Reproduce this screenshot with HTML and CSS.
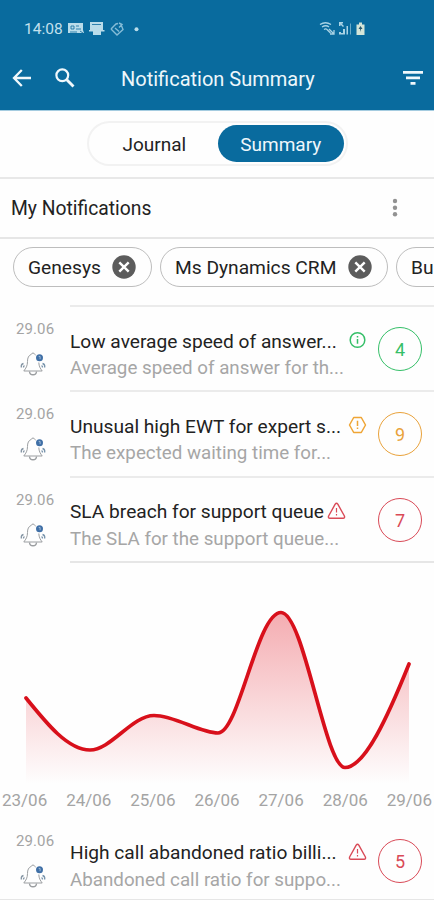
FILE: index.html
```html
<!DOCTYPE html>
<html lang="en">
<head>
  <meta charset="UTF-8" />
  <meta name="viewport" content="width=device-width, initial-scale=1.0" />
  <title>Notification Summary</title>
  <link rel="stylesheet" href="styles.css">
</head>
<body>

<!-- Shared icons -->
<svg class="sprite" width="0" height="0">
  <symbol id="bell" viewBox="0 0 28 26">
    <g fill="none" stroke="#9b9ea1" stroke-width="1">
      <path d="M12.5 3.2c.4-1.600 2.600-1.600 3 0M12.5 3.2C9.400 4.500 8.500 7 8.500 10.500c0 4.500-1.500 6.500-3.700 9.500h18.400c-1.900-2.500-3.200-4.500-3.400-8.500M15.500 3.200l1.200.8" />
      <path d="M10.500 20.500c.3 4.300 6.700 4.300 7 0" stroke-width="1.400" />
      <path d="M4.500 12.500C2.500 13 2 14.500 2.300 16.500M5.500 14.700c-.9.300-1.100 1-1 1.800" stroke="#8696a5" stroke-width="1.300" />
      <path d="M23.500 12.500c2 .5 2.500 2 2.200 4M22.500 14.700c.9.300 1.100 1 1 1.800" stroke="#7894ac" stroke-width="1.300" />
    </g>
    <circle cx="20.500" cy="6.800" r="3.500" fill="#3f6fa6" />
    <path d="M19.700 5.400h1.400v2.800" fill="none" stroke="#b5cce2" stroke-width=".8" />
  </symbol>
  <symbol id="close" viewBox="0 0 24 24">
    <circle cx="12" cy="12" r="11.700" fill="#5c5c5c" />
    <path d="M7.300 7.300l9.400 9.400M16.700 7.300l-9.400 9.400" stroke="#fff" stroke-width="2.400" />
  </symbol>
  <symbol id="info" viewBox="0 0 18 18">
    <g fill="none" stroke="#35bf68" stroke-width="1.500">
      <circle cx="9" cy="9" r="7.300" />
      <path d="M9 8v4.800M9 4.900v1.600" />
    </g>
  </symbol>
  <symbol id="warning" viewBox="0 0 18 18">
    <g fill="none" stroke="#efa535" stroke-width="1.500" stroke-linejoin="round">
      <path d="M5.200 1.500h7.600L17 9l-4.200 7.500H5.200L1 9z" />
      <path d="M9 4.800v5.200M9 11.500v1.600" />
    </g>
  </symbol>
  <symbol id="alert" viewBox="0 0 18 18">
    <g fill="none" stroke="#d94a57" stroke-width="1.400" stroke-linejoin="round">
      <path d="M7.700 2.200Q9 .4 10.300 2.200L16.900 14q.7 2-1.300 2.200H2.400Q.4 16 1.100 14z" />
      <path d="M9 6v4.600M9 12v1.600" stroke-width="1.200" />
    </g>
  </symbol>
</svg>

<header>
  <div class="status-bar">
    <span class="clock">14:08</span>
    <svg class="status-left" width="74" height="16" viewBox="0 0 74 16">
      <g fill="#b9dcea">
        <path d="M0 2h15v7l1 3H0z" />
        <path d="M22 1h13v8h1.500v1.500H33V14h-8v-3.500h-4V9h1z" />
        <circle cx="68.500" cy="8.300" r="2" />
      </g>
      <g fill="none" stroke="#0a6a9e">
        <path d="M3 5h3v3H3zM8 5h3M8 8h5M2 11h7M12 10l3 2" stroke-width=".8" />
        <path d="M24 3.500h9" stroke-width=".8" />
      </g>
      <g fill="none" stroke="#85bcd7" stroke-width="1.400">
        <path d="M43 8l5-5 2-.5M47 12l2 2 6-5.500-2-5M43 8l4 4M51 2l3 1.500-3 3M47 7l4 3.500" />
      </g>
    </svg>
    <svg class="status-right" width="48" height="16" viewBox="0 0 48 16">
      <g fill="none" stroke="#a9d3e5" stroke-width="1.300">
        <path d="M1 3.500q5.500-3.500 11 0M3 6q4-2.500 7 0M5 8.500q2-1.500 3.500.5l3 3M10 8l5 5M15 9v4h-4" />
      </g>
      <g fill="#a9d3e5">
        <path d="M20 1h4v1.500h-1.500L25 5l-1 1-2.500-2.500V5H20zM20 11h2v2.500h-2zM24 8h2v5.500h-5V12h3zM27.500 5H29v8.500h-1.500z" />
        <path d="M31 2.500h1v11h-1z" opacity=".6" />
        <path d="M37.500 3.500h2.500V1.500h3v2h2.500v10.500h-8z" fill="#d4e5d8" />
      </g>
      <path d="M41.500 5l2 3h-1.500l-.5 3-.5-3h-1.500z" fill="#27596e" />
    </svg>
  </div>
  <div class="app-bar">
    <svg class="back" width="20" height="20" viewBox="0 0 20 20" fill="none" stroke="#f0f8fc" stroke-width="2.300">
      <path d="M9.800 2L2 10l7.800 8M2 10h17" />
    </svg>
    <svg class="search" width="22" height="22" viewBox="0 0 22 22" fill="none" stroke="#f0f8fc">
      <circle cx="8.300" cy="8.300" r="5.900" stroke-width="2.200" />
      <path d="M12.800 12.800l6.700 6.700" stroke-width="2.900" />
    </svg>
    <h1>Notification Summary</h1>
    <svg class="filter" width="22" height="16" viewBox="0 0 22 16" fill="#f0f8fc">
      <path d="M1 1h20v2.800H1zM4 6.500h14v2.800H4zM8.500 12h5v2.800h-5z" />
    </svg>
  </div>
</header>

<div class="tabs">
  <div class="switch">
    <a class="tab">Journal</a>
    <a class="tab active">Summary</a>
  </div>
</div>

<div class="section-title">
  <h2>My Notifications</h2>
  <svg width="6" height="20" viewBox="0 0 6 20" fill="#929292">
    <circle cx="3" cy="3" r="2.200" /><circle cx="3" cy="9.700" r="2.200" /><circle cx="3" cy="16.300" r="2.200" />
  </svg>
</div>

<div class="chips">
  <div class="chip genesys"><span>Genesys</span><svg><use href="#close" /></svg></div>
  <div class="chip dynamics"><span>Ms Dynamics CRM</span><svg><use href="#close" /></svg></div>
  <div class="chip business"><span>Bu</span></div>
</div>

<main>
  <article class="row">
    <div class="when"><time>29.06</time><svg><use href="#bell" /></svg></div>
    <div class="body">
      <h3><span class="name long">Low average speed of answer...</span><svg><use href="#info" /></svg></h3>
      <p>Average speed of answer for th...</p>
      <span class="count green">4</span>
    </div>
  </article>

  <article class="row">
    <div class="when"><time>29.06</time><svg><use href="#bell" /></svg></div>
    <div class="body">
      <h3><span class="name long">Unusual high EWT for expert s...</span><svg><use href="#warning" /></svg></h3>
      <p>The expected waiting time for...</p>
      <span class="count orange">9</span>
    </div>
  </article>

  <article class="row">
    <div class="when"><time>29.06</time><svg><use href="#bell" /></svg></div>
    <div class="body">
      <h3><span class="name">SLA breach for support queue</span><svg><use href="#alert" /></svg></h3>
      <p>The SLA for the support queue...</p>
      <span class="count red">7</span>
    </div>
  </article>

  <div class="divider"></div>

  <section class="chart">
    <svg width="434" height="224" viewBox="0 563 434 224">
      <defs>
        <linearGradient id="fade" gradientUnits="userSpaceOnUse" x1="0" y1="612" x2="0" y2="784">
          <stop offset="0" stop-color="#e31b28" stop-opacity=".36" />
          <stop offset="1" stop-color="#e31b28" stop-opacity="0" />
        </linearGradient>
      </defs>
      <path fill="url(#fade)" d="M26 698C47 724 68 750 90 750C111 750 132 715.500 154 715.500C175 715.500 200 733 218 733C239 733 257 612.500 281 612.500C304 612.500 325 767.500 345 767.500C365 767.500 388 716 409 664V784H26z" />
      <path fill="none" stroke="#d8101b" stroke-width="3.700" stroke-linecap="round" d="M26 698C47 724 68 750 90 750C111 750 132 715.500 154 715.500C175 715.500 200 733 218 733C239 733 257 612.500 281 612.500C304 612.500 325 767.500 345 767.500C365 767.500 388 716 409 664" />
    </svg>
    <div class="days">
      <span>23/06</span><span>24/06</span><span>25/06</span><span>26/06</span><span>27/06</span><span>28/06</span><span>29/06</span>
    </div>
  </section>

  <article class="row last">
    <div class="when"><time>29.06</time><svg><use href="#bell" /></svg></div>
    <div class="body">
      <h3><span class="name long">High call abandoned ratio billi...</span><svg><use href="#alert" /></svg></h3>
      <p>Abandoned call ratio for suppo...</p>
      <span class="count red">5</span>
    </div>
  </article>
</main>

</body>
</html>
```
FILE: styles.css
```css
* { box-sizing: border-box; }
body {
  margin: 0;
  width: 434px;
  height: 900px;
  overflow: hidden;
  background: #fefefe;
  color: #222;
  font-family: Roboto, sans-serif;
}
h1, h2, h3, p { margin: 0; font-weight: normal; white-space: nowrap; }
svg { display: block; flex: none; }
.sprite { position: absolute; }

header {
  height: 111px;
  background: #096b9e;
  border-bottom: 1px solid #a5cce0;
  color: #eef7fb;
}
.status-bar {
  display: flex;
  align-items: center;
  height: 36px;
  padding: 21px 67px 0 24px;
}
.clock {
  width: 44px;
  font-size: 15.500px;
  line-height: 16px;
  color: #c3e0ed;
}
.status-right { margin-left: auto; }
.app-bar {
  display: flex;
  align-items: center;
  height: 84px;
  padding: 0 10px 0 12px;
}
.search { margin-left: 22px; }
.app-bar h1 {
  margin-left: 45px;
  padding-top: 2px;
  font-size: 20px;
}
.filter { margin-left: auto; }

.tabs {
  display: flex;
  justify-content: center;
  height: 68px;
  padding-top: 10px;
  border-bottom: 2px solid #e8e8e8;
}
.switch {
  display: flex;
  width: 261px;
  height: 45px;
  padding: 2px 2px 4px 2px;
  margin-left: 1px;
  border: 2px solid #f2f2f2;
  border-radius: 23px;
}
.tab {
  width: 127px;
  height: 37px;
  border-radius: 19px;
  text-align: center;
  font-size: 19px;
  line-height: 39px;
}
.tab.active { background: #096b9e; color: #eef7fb; }

.section-title {
  display: flex;
  align-items: center;
  justify-content: space-between;
  height: 60px;
  padding: 0 36px 0 11px;
  border-bottom: 2px solid #e6e6e6;
}
.section-title h2 { font-size: 19.300px; }

.chips {
  display: flex;
  gap: 8px;
  height: 66px;
  padding: 8px 0 0 13px;
  overflow: hidden;
}
.chip {
  display: flex;
  flex: none;
  align-items: center;
  justify-content: space-between;
  height: 40px;
  padding: 0 15px 0 14px;
  border: 1px solid #bdbdbd;
  border-radius: 21px;
  font-size: 19.200px;
  white-space: nowrap;
}
.chip svg { width: 24px; height: 24px; }
.genesys { width: 139px; }
.dynamics { width: 228px; }
.business { width: 100px; }

.row { display: flex; height: 85.300px; }
.when {
  width: 70px;
  padding: 17px 0 0 16px;
  color: #a4a4a4;
}
.when time {
  display: block;
  font-size: 15px;
  line-height: 15px;
  letter-spacing: 0.1px;
}
.when svg { width: 28px; height: 26px; margin: 14px 0 0 3px; }
.body {
  position: relative;
  flex: 1;
  padding-top: 22px;
  border-top: 2px solid #ebebeb;
}
.body h3 {
  display: flex;
  align-items: center;
  height: 24px;
  font-size: 19.150px;
}
.body h3 svg { width: 19px; height: 18px; margin: -2px 0 0 3px; }
.name.long { width: 275px; }
.body p {
  height: 28px;
  font-size: 18.750px;
  line-height: 30px;
  color: #a6a6a6;
}
.count {
  position: absolute;
  top: 20px;
  right: 12px;
  width: 44px;
  height: 44px;
  border: 1.500px solid;
  border-radius: 50%;
  text-align: center;
  font-size: 18px;
  line-height: 44px;
}
.green { color: #35bf68; }
.orange { color: #e9a23b; }
.red { color: #d94a57; }

.divider { height: 2px; margin-left: 70px; background: #e6e6e6; }
.chart { height: 254px; }
.days {
  display: flex;
  justify-content: space-between;
  padding: 3px 2px 0 2px;
  font-size: 17px;
  line-height: 20px;
  color: #a4a4a4;
}
.last .body { border-top-color: transparent; }
.last { height: 83px; border-bottom: 1px solid #e6e6e6; }
```
